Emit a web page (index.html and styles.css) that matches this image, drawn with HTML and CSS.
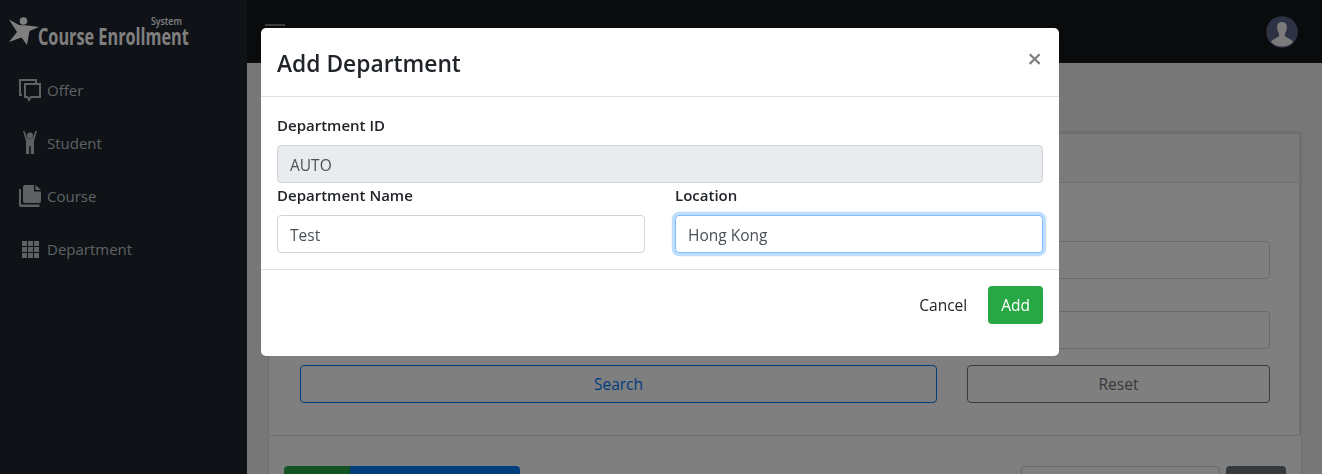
FILE: index.html
```html
<!DOCTYPE html>
<html>
<head>
<meta charset="utf-8">
<title>Course Enrollment System</title>
<link rel="stylesheet" href="styles.css">
</head>
<body>
<div class="layout">
  <aside class="sidebar">
    <div class="logo">
      <svg class="logo-man" width="34" height="30" viewBox="8 16 34 30">
        <circle cx="23.5" cy="21" r="3.8"/>
        <path d="M9 19.5 L19 25 L28 25.5 L39 27 L29.5 31 L27 45 L21.5 37.5 L9 42 L17 32 Z"/>
      </svg>
      <span class="logo-system">System</span>
      <span class="logo-name">Course Enrollment</span>
    </div>
    <nav class="nav">
      <a class="nav-item">
        <svg class="nav-icon" viewBox="0 0 24 24" fill="none" stroke="currentColor" stroke-width="2">
          <path d="M4 17 H2 V2 H18 V5"/>
          <path d="M7 6 H22 V19 H13 L11 22 L9.500 19 H7 Z"/>
        </svg>
        Offer
      </a>
      <a class="nav-item">
        <svg class="nav-icon" viewBox="0 0 24 24" fill="currentColor">
          <circle cx="12" cy="4.500" r="3"/>
          <path d="M5 0 L6.500 0 L8.800 6 C10 8 14 8 15.200 6 L17.500 0 L19 0 L16 10 L16 23 L12.800 23 L12.800 15 L11.200 15 L11.200 23 L8 23 L8 10 Z"/>
        </svg>
        Student
      </a>
      <a class="nav-item">
        <svg class="nav-icon" viewBox="0 0 24 24" fill="currentColor">
          <path d="M1 5 H3 V20.500 H21.500 V23 H3 A2 2 0 0 1 1 21 Z"/>
          <path d="M5 3 A2 2 0 0 1 7 1 H16 V7.500 H23 V17 A2 2 0 0 1 21 19 H7 A2 2 0 0 1 5 17 Z"/>
          <path d="M17.500 1 L23 6 H17.500 Z"/>
        </svg>
        Course
      </a>
      <a class="nav-item">
        <svg class="nav-icon" viewBox="0 0 24 24" fill="currentColor">
          <path d="M4 4 H9 V9 H4 Z M10 4 H15 V9 H10 Z M16 4 H21 V9 H16 Z M4 10 H9 V15 H4 Z M10 10 H15 V15 H10 Z M16 10 H21 V15 H16 Z M4 16 H9 V21 H4 Z M10 16 H15 V21 H10 Z M16 16 H21 V21 H16 Z"/>
        </svg>
        Department
      </a>
    </nav>
  </aside>
  <div class="main">
    <header class="topbar">
      <div class="burger"><span></span><span></span><span></span></div>
      <svg class="avatar" width="32" height="32" viewBox="0 0 32 32">
        <circle cx="16" cy="16" r="15.800" fill="#5a6788"/>
        <path fill="#fff" fill-opacity=".95" d="M16 6 C19.500 6 21 8.500 20.800 12 C20.700 14.500 19.800 16 19 17.500 L19 20 C20 22 25 22.500 27 26 A15.500 15.500 0 0 1 5 26 C7 22.500 12 22 13 20 L13 17.500 C12.200 16 11.300 14.500 11.200 12 C11 8.500 12.500 6 16 6 Z"/>
      </svg>
    </header>
    <div class="content">
      <section class="card search-card">
        <div class="card-header"></div>
        <div class="card-body">
          <div class="field"><input class="bg-input" type="text"></div>
          <div class="field"><input class="bg-input" type="text"></div>
          <div class="search-actions">
            <button class="btn-line btn-search">Search</button>
            <button class="btn-line btn-reset">Reset</button>
          </div>
        </div>
      </section>
      <section class="card list-card">
        <div class="toolbar">
          <div class="btn-group">
            <span class="tool-green"></span>
            <span class="tool-blue"></span>
          </div>
          <div class="tool-search">
            <input class="bg-input" type="text">
            <span class="tool-dark"></span>
          </div>
        </div>
      </section>
    </div>
  </div>
</div>

<div class="backdrop">
  <div class="modal">
    <div class="modal-header">
      <h1 class="modal-title">Add Department</h1>
      <span class="modal-close">&times;</span>
    </div>
    <div class="modal-body">
      <label class="label">Department ID</label>
      <input class="input input-readonly" type="text" value="AUTO" readonly>
      <div class="modal-row">
        <div class="modal-col">
          <label class="label">Department Name</label>
          <input class="input" type="text" value="Test">
        </div>
        <div class="modal-col">
          <label class="label">Location</label>
          <input class="input input-focus" type="text" value="Hong Kong">
        </div>
      </div>
    </div>
    <div class="modal-footer">
      <button class="btn-cancel">Cancel</button>
      <button class="btn-add">Add</button>
    </div>
  </div>
</div>
</body>
</html>
```

FILE: styles.css
```css
html, body {
    margin: 0;
    padding: 0;
    height: 100%;
    overflow: hidden;
}
body {
    font-family: "Open Sans", "Noto Sans", "Liberation Sans", sans-serif;
    font-size: 16px;
    color: #212529;
    background-color: #eee;
}
button, input {
    font-family: inherit;
    font-size: 15.500px;
    box-sizing: border-box;
}
.layout {
    display: flex;
    height: 474px;
    overflow: hidden;
}

/* sidebar */
.sidebar {
    flex: 0 0 247px;
    background-color: #1e252d;
}
.logo {
    position: relative;
    height: 63px;
    color: #fff;
}
.logo-man {
    position: absolute;
    left: 8px;
    top: 16px;
    fill: #fff;
}
.logo-system {
    position: absolute;
    left: 151px;
    top: 16px;
    font-size: 11px;
    font-weight: 600;
    line-height: 10px;
    transform: scaleX(.8);
    transform-origin: left top;
}
.logo-name {
    position: absolute;
    left: 38px;
    top: 26px;
    font-size: 24px;
    font-weight: 700;
    line-height: 20px;
    white-space: nowrap;
    transform: scaleX(.677);
    transform-origin: left top;
}
.nav-item {
    display: flex;
    align-items: center;
    gap: 5px;
    height: 53px;
    padding-left: 18px;
    font-size: 15px;
    color: #bcc2c8;
}
.nav-icon {
    width: 24px;
    height: 24px;
}

/* top bar and page behind the modal */
.main {
    flex: 1;
    min-width: 0;
    display: flex;
    flex-direction: column;
}
.topbar {
    flex: 0 0 63px;
    display: flex;
    align-items: center;
    justify-content: space-between;
    padding: 0 24px 0 18px;
    background-color: #15171b;
}
.burger {
    display: flex;
    flex-direction: column;
    gap: 5px;
    width: 20px;
}
.burger span {
    display: block;
    height: 2px;
    background-color: #777;
}
.content {
    flex: 1;
    min-height: 0;
    overflow: hidden;
    padding: 68px 20px 0 21px;
}
.card {
    background-color: #fff;
    border: 1px solid #dfdfdf;
}
.search-card {
    border-top-width: 3px;
    border-right-width: 3px;
    border-radius: 4px;
}
.list-card {
    border-top: 0;
    height: 100px;
    padding: 30px 15px 0;
}
.card-header {
    height: 48px;
    background-color: #f7f7f7;
    border-bottom: 1px solid #dfdfdf;
}
.card-body {
    padding: 26px 29px 32px 31px;
}
.field {
    padding-top: 32px;
}
.bg-input {
    display: block;
    width: 100%;
    height: 38px;
    background-color: #fff;
    border: 1px solid #ced4da;
    border-radius: 4px;
}
.search-actions {
    display: flex;
    gap: 30px;
    margin-top: 16px;
}
.btn-line {
    height: 38px;
    background: transparent;
    border: 1px solid;
    border-radius: 4px;
}
.btn-search {
    flex: 0 0 637px;
    color: #007bff;
}
.btn-reset {
    flex: 1;
    color: #6c757d;
}
.toolbar {
    display: flex;
    justify-content: space-between;
}
.btn-group {
    display: flex;
    height: 38px;
    border-radius: 4px;
    overflow: hidden;
}
.tool-green {
    width: 66px;
    background-color: #28a745;
}
.tool-blue {
    width: 170px;
    background-color: #007bff;
}
.tool-search {
    display: flex;
    gap: 6px;
}
.tool-search .bg-input {
    width: 199px;
}
.tool-dark {
    width: 60px;
    height: 38px;
    background-color: #6c757d;
    border-radius: 4px;
}

/* modal */
.backdrop {
    position: fixed;
    top: 0;
    left: 0;
    right: 0;
    bottom: 0;
    background-color: rgba(0, 0, 0, .5);
}
.modal {
    width: 798px;
    margin: 28px 0 0 261px;
    background-color: #fff;
    border-radius: 5px;
}
.modal-header {
    display: flex;
    justify-content: space-between;
    align-items: flex-start;
    padding: 18px 16px 14px;
    border-bottom: 1px solid #dee2e6;
}
.modal-title {
    margin: 0;
    font-size: 22.800px;
    font-weight: 600;
    line-height: 36px;
}
.modal-close {
    margin: -6px 1px 0 0;
    font-size: 26px;
    font-weight: 600;
    line-height: 36px;
    color: #7f7f7f;
}
.modal-body {
    padding: 16px;
}
.label {
    display: block;
    margin-bottom: 8px;
    font-size: 15px;
    font-weight: 600;
    line-height: 24px;
}
.input {
    display: block;
    width: 100%;
    height: 38px;
    padding: 8px 12px 6px;
    color: #495057;
    background-color: #fff;
    border: 1px solid #ced4da;
    border-radius: 4px;
    outline: 0;
}
.input-readonly {
    background-color: #e9ecef;
}
.input-focus {
    border-color: #80bdff;
    box-shadow: 0 0 0 3.200px rgba(0, 123, 255, .25);
}
.modal-row {
    display: flex;
    gap: 30px;
}
.modal-col {
    flex: 1;
}
.modal-footer {
    display: flex;
    justify-content: flex-end;
    gap: 8px;
    padding: 16px 16px 32px;
    border-top: 1px solid #dee2e6;
}
.btn-cancel, .btn-add {
    height: 38px;
    padding: 0 13px;
    border: 0;
    border-radius: 4px;
}
.btn-cancel {
    color: #212529;
    background: transparent;
}
.btn-add {
    color: #fff;
    background-color: #28a745;
}
```
